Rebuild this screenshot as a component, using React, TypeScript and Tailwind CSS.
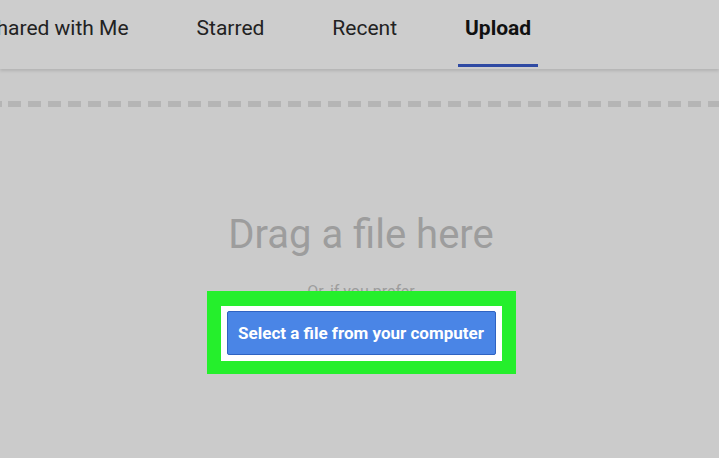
import React from "react";

const tabs = [
  { label: "Shared with Me", active: false },
  { label: "Starred", active: false },
  { label: "Recent", active: false },
  { label: "Upload", active: true },
];

export default function App() {
  return (
    <div className="h-[458px] w-full overflow-hidden bg-[#cbcbcb] font-['Roboto',sans-serif]">
      {/* tab bar */}
      <header className="relative z-10 h-[69px] bg-[#cdcdcd] shadow-[0_2px_3px_rgba(0,0,0,0.12)]">
        <nav className="ml-[-23px] flex h-full gap-[54px]">
          {tabs.map((tab) => (
            <div key={tab.label} className="flex h-full flex-col">
              <span
                className={`px-[7px] pt-[15px] text-[21px] leading-[26px] whitespace-nowrap ${
                  tab.active ? "font-bold text-[#111]" : "text-[#222]"
                }`}
              >
                {tab.label}
              </span>
              <div
                className={`mt-auto mb-[2px] h-[3px] w-full ${tab.active ? "bg-[#2f4aa3]" : "bg-transparent"}`}
              />
            </div>
          ))}
        </nav>
      </header>

      {/* drop zone */}
      <main className="flex flex-col items-center">
        <div className="mt-[32px] h-[6px] w-full bg-[repeating-linear-gradient(90deg,#b5b5b5_0_13px,transparent_13px_20px)] bg-[position:8px_0]" />

        <h2 className="mt-[105px] ml-[3px] text-[40px] leading-[46px] text-[#9d9d9d]">Drag a file here</h2>
        <p className="mt-[24px] ml-[3px] text-[16px] leading-[20px] text-[#9d9d9d]">Or, if you prefer</p>

        <div className="relative mt-[-11px] ml-[3px] bg-[#25ef2c] px-[14px] pt-[15px] pb-[13px]">
          <div className="bg-white px-[6px] pt-[5px] pb-[6px]">
            <button className="h-[44px] w-[269px] rounded-[2px] border border-[#2f63c2] bg-[#4a85e6] pt-[2px] text-[17px] font-bold text-white">
              Select a file from your computer
            </button>
          </div>
        </div>
      </main>
    </div>
  );
}
